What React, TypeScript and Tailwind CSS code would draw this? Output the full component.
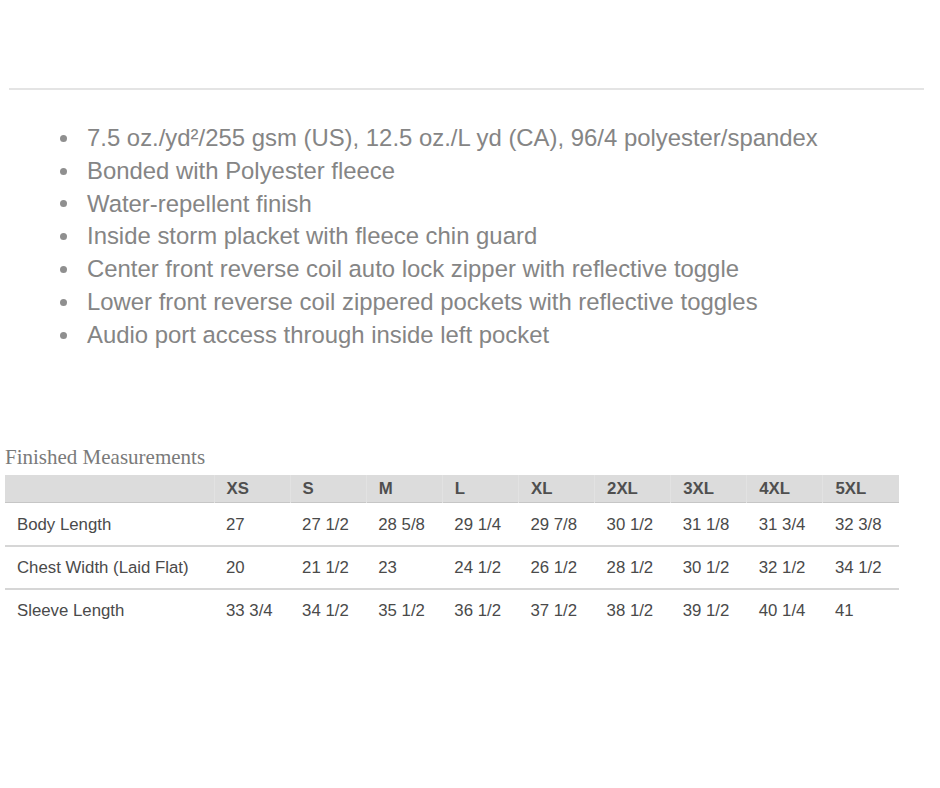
const features = [
  "7.5 oz./yd²/255 gsm (US), 12.5 oz./L yd (CA), 96/4 polyester/spandex",
  "Bonded with Polyester fleece",
  "Water-repellent finish",
  "Inside storm placket with fleece chin guard",
  "Center front reverse coil auto lock zipper with reflective toggle",
  "Lower front reverse coil zippered pockets with reflective toggles",
  "Audio port access through inside left pocket",
]

const sizes = ["XS", "S", "M", "L", "XL", "2XL", "3XL", "4XL", "5XL"]

const rows = [
  { label: "Body Length", values: ["27", "27 1/2", "28 5/8", "29 1/4", "29 7/8", "30 1/2", "31 1/8", "31 3/4", "32 3/8"] },
  { label: "Chest Width (Laid Flat)", values: ["20", "21 1/2", "23", "24 1/2", "26 1/2", "28 1/2", "30 1/2", "32 1/2", "34 1/2"] },
  { label: "Sleeve Length", values: ["33 3/4", "34 1/2", "35 1/2", "36 1/2", "37 1/2", "38 1/2", "39 1/2", "40 1/4", "41"] },
]

export default function App() {
  return (
    <div className="min-h-[788px] w-[940px] bg-white font-[family-name:'Liberation_Sans',Arial,sans-serif]">
      <div className="pt-[88px] pl-[9px] pr-[16px]">
        <div className="h-[2px] bg-[#e4e4e4]" />
      </div>

      <ul className="mt-[32px] flex flex-col pl-[60px]">
        {features.map((f) => (
          <li key={f} className="flex items-center gap-[20px] text-[23.9px] leading-[32.8px] text-[#858585]">
            <span className="size-[7px] shrink-0 rounded-full bg-[#8f8f8f]" />
            {f}
          </li>
        ))}
      </ul>

      <h3 className="mt-[93px] pl-[5px] font-[family-name:'Liberation_Serif','Times_New_Roman',serif] text-[21px] leading-[24px] text-[#7a7a7a]">
        Finished Measurements
      </h3>

      <table className="mt-[6px] ml-[5px] w-[894px] table-fixed border-collapse text-[16.8px] text-[#4a4a4a]">
        <colgroup>
          <col className="w-[209px]" />
          {sizes.map((s) => (
            <col key={s} />
          ))}
        </colgroup>
        <thead>
          <tr className="h-[28px] border-b border-[#c6c6c6] bg-[#dcdcdc]">
            <th />
            {sizes.map((s) => (
              <th key={s} className="border-l border-[#e2e2e2] px-[12px] pt-[1px] text-left font-bold text-[#4f4f4f]">
                {s}
              </th>
            ))}
          </tr>
        </thead>
        <tbody>
          {rows.map((r, i) => (
            <tr key={r.label} className={i < rows.length - 1 ? "h-[43px] border-b-2 border-[#d6d6d6]" : "h-[43px]"}>
              <td className="px-[12px] pt-[1px]">{r.label}</td>
              {r.values.map((v, j) => (
                <td key={j} className="px-[12px] pt-[1px]">
                  {v}
                </td>
              ))}
            </tr>
          ))}
        </tbody>
      </table>
    </div>
  )
}
